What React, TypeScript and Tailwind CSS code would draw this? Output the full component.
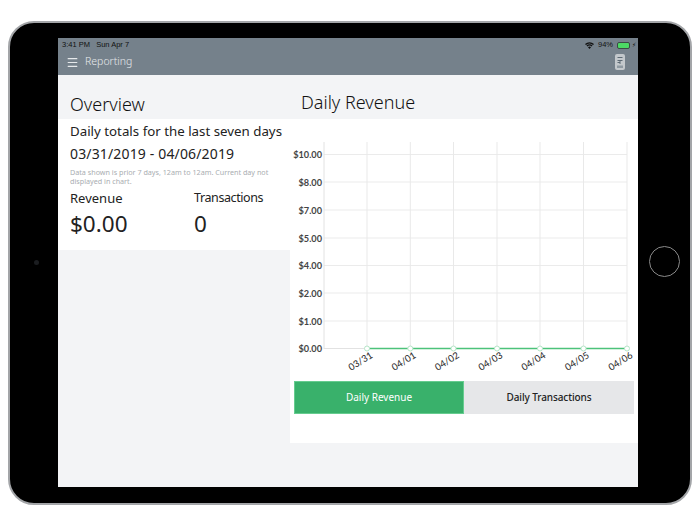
import { Menu } from "lucide-react"

const yTicks = [
  { label: "$10.00", y: 154.5 },
  { label: "$8.00", y: 182 },
  { label: "$7.00", y: 210 },
  { label: "$5.00", y: 238 },
  { label: "$4.00", y: 265.5 },
  { label: "$2.00", y: 293 },
  { label: "$1.00", y: 321 },
  { label: "$0.00", y: 348.5 },
]

const xTicks = [
  { label: "03/31", x: 367 },
  { label: "04/01", x: 410.3 },
  { label: "04/02", x: 453.5 },
  { label: "04/03", x: 497 },
  { label: "04/04", x: 540 },
  { label: "04/05", x: 583.5 },
  { label: "04/06", x: 627 },
]

// svg origin sits at page (290, 119)
function RevenueChart() {
  return (
    <svg width="348" height="258" viewBox="290 119 348 258" className="block">
      {yTicks.map((t) => (
        <g key={t.label}>
          <line x1="324" x2="627" y1={t.y} y2={t.y} stroke="#ebebeb" strokeWidth="1" />
          <text
            x="322"
            y={t.y + 3.5}
            textAnchor="end"
            fontSize="9.2"
            fontWeight="700"
            fill="#444"
            fontFamily="Lato, sans-serif"
          >
            {t.label}
          </text>
        </g>
      ))}
      {xTicks.map((t) => (
        <g key={t.label}>
          <line x1={t.x} x2={t.x} y1="142" y2="348.5" stroke="#e9e9e9" strokeWidth="1" />
          <text
            x={t.x - 16}
            y="371"
            fontSize="9.5"
            fontWeight="500"
            fill="#333"
            fontFamily="Lato, sans-serif"
            transform={`rotate(-32 ${t.x - 16} 371)`}
          >
            {t.label}
          </text>
        </g>
      ))}
      <line x1="324" x2="324" y1="142" y2="349" stroke="#e2e2e2" strokeWidth="1" />
      <line x1="324" x2="367" y1="348.5" y2="348.5" stroke="#e2e2e2" strokeWidth="1" />
      <line x1="367" x2="627" y1="348.5" y2="348.5" stroke="#4cc27a" strokeWidth="1.5" />
      {xTicks.map((t) => (
        <circle key={t.label} cx={t.x} cy="348.5" r="2.5" fill="#fff" stroke="#b5e6c8" strokeWidth="1" />
      ))}
    </svg>
  )
}

function WifiIcon() {
  return (
    <svg width="9" height="7" viewBox="0 0 18 14" fill="#111">
      <path d="M9 14 L6 10.5 A4.6 4.6 0 0 1 12 10.5 Z" />
      <path d="M4.6 9 L3 7.1 A9 9 0 0 1 15 7.1 L13.4 9 A6.6 6.6 0 0 0 4.6 9 Z" />
      <path d="M1.9 5.9 L0 3.8 A13.4 13.4 0 0 1 18 3.8 L16.1 5.9 A10.7 10.7 0 0 0 1.9 5.9 Z" />
    </svg>
  )
}

function RemoteIcon() {
  return (
    <svg width="10" height="16" viewBox="0 0 10 16">
      <rect x="0" y="0" width="10" height="16" rx="2" fill="#c3c8cc" />
      <path d="M2.5 3.5 H7.5 M2.5 6.5 H7.5 M5 6.5 V10 M2.5 8.5 H5" stroke="#5d6a74" strokeWidth="1" fill="none" />
      <rect x="2" y="11.5" width="6" height="2.5" fill="#8f9aa2" />
    </svg>
  )
}

export default function App() {
  return (
    <div className="h-[525px] w-[700px] overflow-hidden bg-white pl-[8px] pt-[21px] font-['Noto_Sans',sans-serif]">
      <div className="relative h-[484px] w-[684px] rounded-[26px] border-2 border-[#a3a5a8] bg-black pl-[48px] pt-[15px]">
        <div className="absolute left-[24px] top-[237px] h-[5px] w-[5px] rounded-full bg-[#1b1d20]" />
        <div className="absolute left-[639px] top-[223px] h-[31px] w-[31px] rounded-full border border-[#8a8a8a]" />

        <div className="flex h-[449px] w-[580px] flex-col bg-[#f3f4f6]">
          <header className="h-[37px] shrink-0 bg-[#75818b]">
            <div className="flex h-[12px] items-end justify-between pl-[4px] pr-[2px] text-[7.5px] leading-[10px] text-[#111] font-['Liberation_Sans',sans-serif]">
              <span>3:41 PM&nbsp;&nbsp;&nbsp;Sun Apr 7</span>
              <div className="flex items-center gap-[4px]">
                <WifiIcon />
                <span>94%</span>
                <div className="flex items-center gap-[2px]">
                  <div className="h-[7px] w-[13px] rounded-[2px] border border-[#3c4a45] bg-[#4cd964]" />
                  <span className="text-[6px] leading-none">⚡︎</span>
                </div>
              </div>
            </div>
            <div className="flex h-[25px] items-center justify-between pb-[1px] pl-[8px] pr-[13px]">
              <div className="flex items-center gap-[6px] text-[#e6e9eb]">
                <Menu size={13} strokeWidth={2.2} />
                <span className="text-[10.5px] font-light">Reporting</span>
              </div>
              <RemoteIcon />
            </div>
          </header>

          <div className="flex flex-1 items-start">
            <section className="w-[232px] shrink-0">
              <h1 className="h-[44px] pl-[12px] pt-[16px] text-[18px] leading-[26px] font-light text-[#111]">Overview</h1>
              <div className="h-[131px] bg-white pl-[12px] pr-[12px] text-[#222]">
                <p className="whitespace-nowrap pt-[2px] text-[13.3px] leading-[20px]">
                  Daily totals for the last seven days
                </p>
                <p className="pt-[3px] text-[14px] leading-[20px] tracking-[0.15px]">03/31/2019 - 04/06/2019</p>
                <p className="pt-[4px] text-[7.2px] leading-[9px] text-[#a9adb1]">
                  Data shown is prior 7 days, 12am to 12am. Current day not displayed in chart.
                </p>
                <div className="flex pt-[2px]">
                  <div className="w-[124px]">
                    <p className="text-[13px] leading-[20px]">Revenue</p>
                    <p className="text-[22.5px] leading-[32px]">$0.00</p>
                  </div>
                  <div>
                    <p className="whitespace-nowrap text-[12.5px] leading-[20px] tracking-[-0.4px]">Transactions</p>
                    <p className="text-[22.5px] leading-[32px]">0</p>
                  </div>
                </div>
              </div>
            </section>

            <section className="w-[348px]">
              <h2 className="h-[44px] pl-[11px] pt-[14px] text-[18px] leading-[26px] font-light text-[#111]">Daily Revenue</h2>
              <div className="h-[324px] bg-white">
                <RevenueChart />
                <div className="flex px-[4px] pt-[4px] text-[10px]">
                  <button className="h-[33px] w-[170px] border border-[#66cc8f] bg-[#39b16b] text-white">Daily Revenue</button>
                  <button className="h-[33px] w-[170px] bg-[#e6e7e9] text-[#222] font-medium tracking-[-0.1px]">Daily Transactions</button>
                </div>
              </div>
            </section>
          </div>
        </div>
      </div>
    </div>
  )
}
